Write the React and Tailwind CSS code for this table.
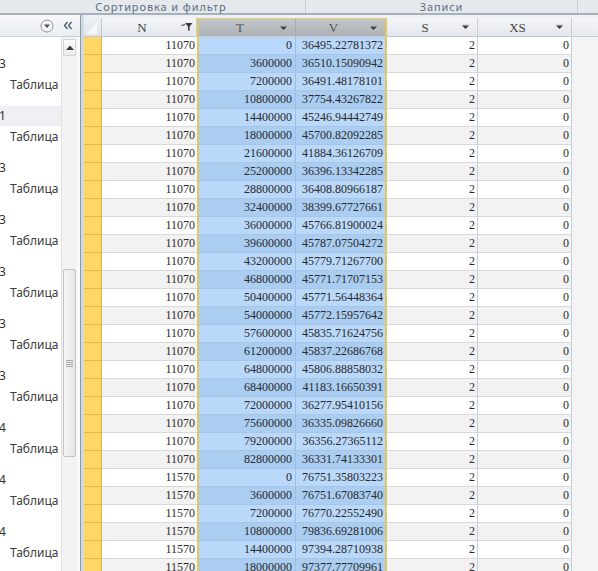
import React from "react";

const VALUES = [
  "36495.22781372","36510.15090942","36491.48178101","37754.43267822","45246.94442749",
  "45700.82092285","41884.36126709","36396.13342285","36408.80966187","38399.67727661",
  "45766.81900024","45787.07504272","45779.71267700","45771.71707153","45771.56448364",
  "45772.15957642","45835.71624756","45837.22686768","45806.88858032","41183.16650391",
  "36277.95410156","36335.09826660","36356.27365112","36331.74133301","76751.35803223",
  "76751.67083740","76770.22552490","79836.69281006","97394.28710938","97377.77709961",
];

const ROWS = VALUES.map((v, i) => ({
  n: i < 24 ? "11070" : "11570",
  t: String((i < 24 ? i : i - 24) * 3600000),
  v,
}));

const NAV_ITEMS = ["3", "1", "3", "3", "3", "3", "3", "4", "4", "4"];

function DropArrow() {
  return (
    <svg width="7" height="5" viewBox="0 0 7 5" className="block">
      <polygon points="0,1 7,1 3.5,4.5" fill="#3a3a3a" />
      <line x1="0" y1="0.5" x2="7" y2="0.5" stroke="#9a9a9a" strokeWidth="1" />
    </svg>
  );
}

function FilterIcon() {
  return (
    <svg width="12" height="10" viewBox="0 0 12 10" className="block">
      <line x1="0.5" y1="3.5" x2="4" y2="2.5" stroke="#444" strokeWidth="1.2" />
      <polygon points="4,1 11.5,1 8.6,4.6 8.6,9 7,8 7,4.6" fill="#3a3a3a" />
    </svg>
  );
}

function HeaderCell({ label, w, selected, left, right, icon }) {
  return (
    <div
      className={
        "relative h-full flex items-center justify-center pr-[14px] border-b border-[#c3cbd6] " +
        w +
        (selected
          ? " bg-gradient-to-b from-[#c3c6ca] to-[#aeb2b7] border-t border-t-[#e8cf74]"
          : " bg-gradient-to-b from-[#f4f6f8] to-[#e3e7ec] border-r border-r-[#c5ceda]") +
        (left ? " border-l-2 border-l-[#e4c659] border-r border-r-[#9eb0c4]" : "") +
        (right ? " border-r-2 border-r-[#e4c659]" : "")
      }
    >
      <span className={"text-[13px] leading-none " + (selected ? "text-[#555]" : "text-[#444]")}>{label}</span>
      <span className={"absolute top-1/2 -translate-y-1/2 " + (icon === "filter" ? "right-[3px]" : "right-[8px]")}>
        {icon === "filter" ? <FilterIcon /> : <DropArrow />}
      </span>
    </div>
  );
}

function Row({ r, i }) {
  const odd = i % 2 === 1;
  const plain = odd ? "bg-[#f2f2f2]" : "bg-white";
  const sel = odd ? "bg-[#abcdf1]" : "bg-[#bad8f9]";
  return (
    <div className="flex h-[18px] shrink-0 text-[12px] leading-[17px] text-[#2a2a2a]">
      <div className="w-[18px] bg-[#fdd765] border-b border-[#e6b74c] border-r border-r-[#e2b24a]" />
      <div className={"w-[95px] text-right pr-[2px] border-b border-[#d9d9d9] " + plain}>{r.n}</div>
      <div className={"w-[99px] text-right pr-[3px] border-b border-[#a9c6e6] border-l-2 border-l-[#e4c659] border-r border-r-[#9fbde0] " + sel}>{r.t}</div>
      <div className={"w-[91px] text-right pr-[2px] border-b border-[#a9c6e6] border-r-2 border-r-[#e4c659] " + sel}>{r.v}</div>
      <div className={"w-[91px] text-right pr-[2px] border-b border-[#d9d9d9] border-r border-r-[#c5cfdc] " + plain}>2</div>
      <div className={"w-[94px] text-right pr-[2px] border-b border-[#d9d9d9] border-r border-r-[#c5cfdc] " + plain}>0</div>
      <div className="flex-1 bg-[#f4f4f4]" />
    </div>
  );
}

export default function App() {
  return (
    <div className="w-[598px] h-[571px] overflow-hidden bg-[#eef1f5] flex flex-col font-['Noto_Sans',sans-serif]">
      {/* Ribbon group labels */}
      <div className="h-[15px] shrink-0 flex bg-[#e5e9ee] border-b-2 border-[#a8b0ba] text-[11px] leading-[13px] text-[#5f6e7f]">
        <div className="w-[17px]" />
        <div className="w-[289px] text-center border-r border-[#c8cfd8] tracking-[0.9px]">Сортировка и фильтр</div>
        <div className="w-[272px] text-center border-r border-[#c8cfd8] tracking-[0.9px]">Записи</div>
        <div className="flex-1" />
      </div>

      <div className="flex flex-1 min-h-0">
        {/* Navigation pane */}
        <div className="w-[80px] shrink-0 flex flex-col bg-white">
          <div className="h-[22px] shrink-0 flex items-center border-b border-[#c9d0d9] bg-gradient-to-b from-[#f8f9fb] to-[#e9edf2]">
            <div className="w-[40px]" />
            <svg width="14" height="14" viewBox="0 0 14 14" className="block">
              <circle cx="7" cy="7" r="6" fill="#f3f4f6" stroke="#8d97a3" strokeWidth="1" />
              <polygon points="4,5.5 10,5.5 7,9" fill="#4a4f57" />
            </svg>
            <div className="w-[9px]" />
            <svg width="10" height="9" viewBox="0 0 10 9" className="block">
              <polyline points="4.5,1 1.5,4.5 4.5,8" fill="none" stroke="#4b5968" strokeWidth="1.3" />
              <polyline points="8.5,1 5.5,4.5 8.5,8" fill="none" stroke="#4b5968" strokeWidth="1.3" />
            </svg>
          </div>
          <div className="flex flex-1 min-h-0">
            <div className="w-[61px] overflow-hidden pt-[17px] text-[12px] leading-[20px] text-[#333]">
              {NAV_ITEMS.map((d, i) => (
                <div key={i} className="h-[52px]">
                  <div className={"h-[20px] -ml-[1px] " + (i === 1 ? "bg-[#eef0f3]" : "")}>{d}</div>
                  <div className="h-[21px] pl-[10px] leading-[22px] text-[#3d3d3d]">Таблица</div>
                </div>
              ))}
            </div>
            <div className="w-[16px] bg-[#f3f3f3] border-l border-[#e0e0e0] flex flex-col pt-[2px]">
              <div className="h-[17px] mx-[1px] border border-[#d4d4d4] bg-gradient-to-b from-[#fbfbfb] to-[#ececec] flex items-center justify-center">
                <svg width="8" height="5" viewBox="0 0 8 5" className="block">
                  <polygon points="0,5 8,5 4,0.5" fill="#3c3c3c" />
                </svg>
              </div>
              <div className="h-[213px]" />
              <div className="h-[188px] mx-[1px] border border-[#c4c4c4] rounded-[2px] bg-gradient-to-r from-[#f6f6f6] to-[#e4e4e4] flex items-center justify-center">
                <svg width="7" height="7" viewBox="0 0 7 7" className="block">
                  <line x1="0" y1="0.5" x2="7" y2="0.5" stroke="#a8a8a8" />
                  <line x1="0" y1="2.5" x2="7" y2="2.5" stroke="#a8a8a8" />
                  <line x1="0" y1="4.5" x2="7" y2="4.5" stroke="#a8a8a8" />
                  <line x1="0" y1="6.5" x2="7" y2="6.5" stroke="#a8a8a8" />
                </svg>
              </div>
            </div>
            <div className="w-[3px] bg-[#fafafa]" />
          </div>
        </div>

        {/* Splitter */}
        <div className="w-[1px] shrink-0 bg-[#8e99a6]" />
        <div className="w-[3px] shrink-0 bg-[#d3d9e1]" />

        {/* Datasheet */}
        <div className="flex-1 min-w-0 flex flex-col pt-[3px] font-['Liberation_Serif',serif]">
          <div className="h-[19px] shrink-0 flex">
            <div className="w-[18px] h-full border-b border-r border-[#c3cbd6] bg-gradient-to-b from-[#eef1f4] to-[#dfe4ea] relative">
              <svg width="18" height="18" viewBox="0 0 18 18" className="absolute inset-0">
                <polygon points="3,16 13,5 13,16" fill="#f6f7f9" />
                <line x1="3" y1="16" x2="13" y2="5" stroke="#ffffff" strokeWidth="1" />
              </svg>
            </div>
            <HeaderCell label="N" w="w-[95px]" icon="filter" />
            <HeaderCell label="T" w="w-[99px]" selected left />
            <HeaderCell label="V" w="w-[91px]" selected right />
            <HeaderCell label="S" w="w-[91px]" />
            <HeaderCell label="XS" w="w-[94px]" />
            <div className="flex-1 h-full border-b border-[#c3cbd6] bg-gradient-to-b from-[#f4f6f8] to-[#e8ebef]" />
          </div>
          <div className="flex-1 min-h-0 overflow-hidden flex flex-col">
            {ROWS.map((r, i) => (
              <Row key={i} r={r} i={i} />
            ))}
          </div>
        </div>
      </div>
    </div>
  );
}
